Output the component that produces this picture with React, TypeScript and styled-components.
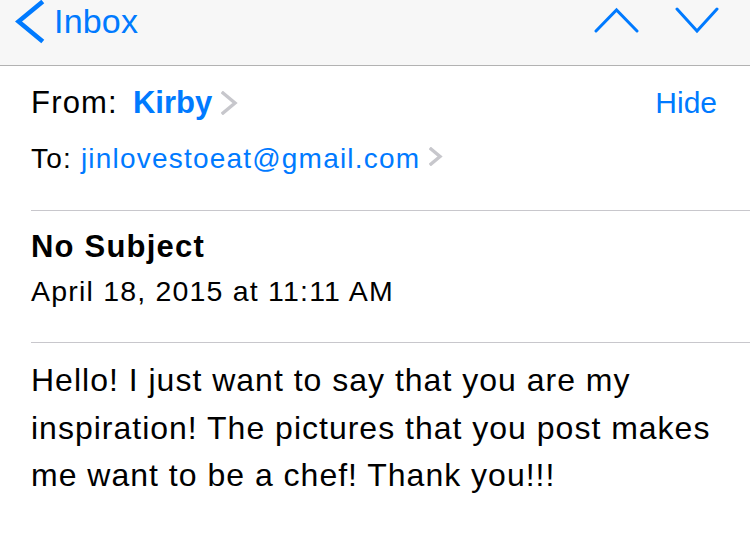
import React from 'react';
import styled, { createGlobalStyle } from 'styled-components';

const GlobalStyle = createGlobalStyle`
  html, body {
    margin: 0;
    padding: 0;
    background: #ffffff;
  }
  body {
    font-family: "Liberation Sans", Arial, sans-serif;
    color: #000000;
    -webkit-font-smoothing: antialiased;
  }
`;

const BLUE = '#007aff';
const GRAY = '#c7c7cc';

const Screen = styled.div`
  width: 750px;
  height: 538px;
  overflow: hidden;
  background: #ffffff;
`;

const NavBar = styled.div`
  height: 65px;
  background: #f7f7f7;
  border-bottom: 1px solid #b2b2b2;
  display: flex;
  align-items: flex-start;
  padding: 0 29px 0 15px;
`;

const BackButton = styled.div`
  display: flex;
  align-items: flex-start;
  gap: 9px;
  color: ${BLUE};
`;

const BackLabel = styled.span`
  font-size: 34px;
  line-height: 40px;
  margin-top: 1px;
  letter-spacing: 0.2px;
`;

const NavArrows = styled.div`
  margin-left: auto;
  display: flex;
  gap: 35px;
  padding-top: 7px;
`;

const Content = styled.div`
  padding-left: 31px;
`;

type SectionProps = {
  top: number;
  bottom: number;
};

const Section = styled.div<SectionProps>`
  padding-top: ${props => props.top}px;
  padding-bottom: ${props => props.bottom}px;
  border-bottom: 1px solid #c8c7cc;
`;

type RowProps = {
  size: number;
};

const Row = styled.div<RowProps>`
  display: flex;
  align-items: center;
  height: 56px;
  line-height: 56px;
  font-size: ${props => props.size}px;
  letter-spacing: 1.2px;
  white-space: nowrap;
`;

const Label = styled.span`
  color: #000000;
`;

const FromName = styled.span`
  color: ${BLUE};
  font-weight: bold;
  margin-left: 15px;
  letter-spacing: 0;
`;

const Address = styled.span`
  color: ${BLUE};
  margin-left: 9px;
`;

const HideButton = styled.span`
  margin-left: auto;
  margin-right: 33px;
  color: ${BLUE};
  font-size: 30px;
  letter-spacing: 0;
`;

const Disclosure = styled.svg<{ lift?: number }>`
  flex: none;
  margin-left: 9px;
  margin-bottom: ${props => props.lift || 0}px;
`;

const Subject = styled.div`
  font-size: 31px;
  font-weight: bold;
  line-height: 40px;
  letter-spacing: 1.2px;
`;

const DateLine = styled.div`
  margin-top: 4px;
  font-size: 28.5px;
  line-height: 40px;
  letter-spacing: 1.2px;
`;

const Body = styled.div`
  padding-top: 14px;
  font-size: 32px;
  line-height: 47.5px;
  letter-spacing: 1px;
`;

function BackChevron() {
  return (
    <svg width="30" height="44" viewBox="0 0 30 44">
      <polyline points="26,3 3.5,21.5 26,40" fill="none" stroke={BLUE} strokeWidth="4.6" strokeLinecap="square" strokeLinejoin="miter" />
    </svg>
  );
}

function ArrowUp() {
  return (
    <svg width="46" height="28" viewBox="0 0 46 28">
      <polyline points="2,24 22.5,3 43,24" fill="none" stroke={BLUE} strokeWidth="3" strokeLinecap="round" strokeLinejoin="miter" />
    </svg>
  );
}

function ArrowDown() {
  return (
    <svg width="46" height="28" viewBox="0 0 46 28">
      <polyline points="2,2 22,24 42,2" fill="none" stroke={BLUE} strokeWidth="3" strokeLinecap="round" strokeLinejoin="miter" />
    </svg>
  );
}

function GrayChevron({ width, height, lift }: { width: number; height: number; lift?: number }) {
  return (
    <Disclosure width={width} height={height} viewBox={`0 0 ${width} ${height}`} lift={lift}>
      <polyline
        points={`2,2 ${width - 3},${height / 2} 2,${height - 2}`}
        fill="none"
        stroke={GRAY}
        strokeWidth="3.4"
        strokeLinecap="square"
      />
    </Disclosure>
  );
}

export default function App() {
  return (
    <Screen>
      <GlobalStyle />
      <NavBar>
        <BackButton>
          <BackChevron />
          <BackLabel>Inbox</BackLabel>
        </BackButton>
        <NavArrows>
          <ArrowUp />
          <ArrowDown />
        </NavArrows>
      </NavBar>
      <Content>
        <Section top={9} bottom={23}>
          <Row size={31}>
            <Label>From:</Label>
            <FromName>Kirby</FromName>
            <GrayChevron width={17} height={24} />
            <HideButton>Hide</HideButton>
          </Row>
          <Row size={28}>
            <Label>To:</Label>
            <Address>jinlovestoeat@gmail.com</Address>
            <GrayChevron width={14} height={19} lift={6} />
          </Row>
        </Section>
        <Section top={16} bottom={31}>
          <Subject>No Subject</Subject>
          <DateLine>April 18, 2015 at 11:11 AM</DateLine>
        </Section>
        <Body>
          Hello! I just want to say that you are my inspiration! The pictures that you post makes me want to be a chef! Thank you!!!
        </Body>
      </Content>
    </Screen>
  );
}
